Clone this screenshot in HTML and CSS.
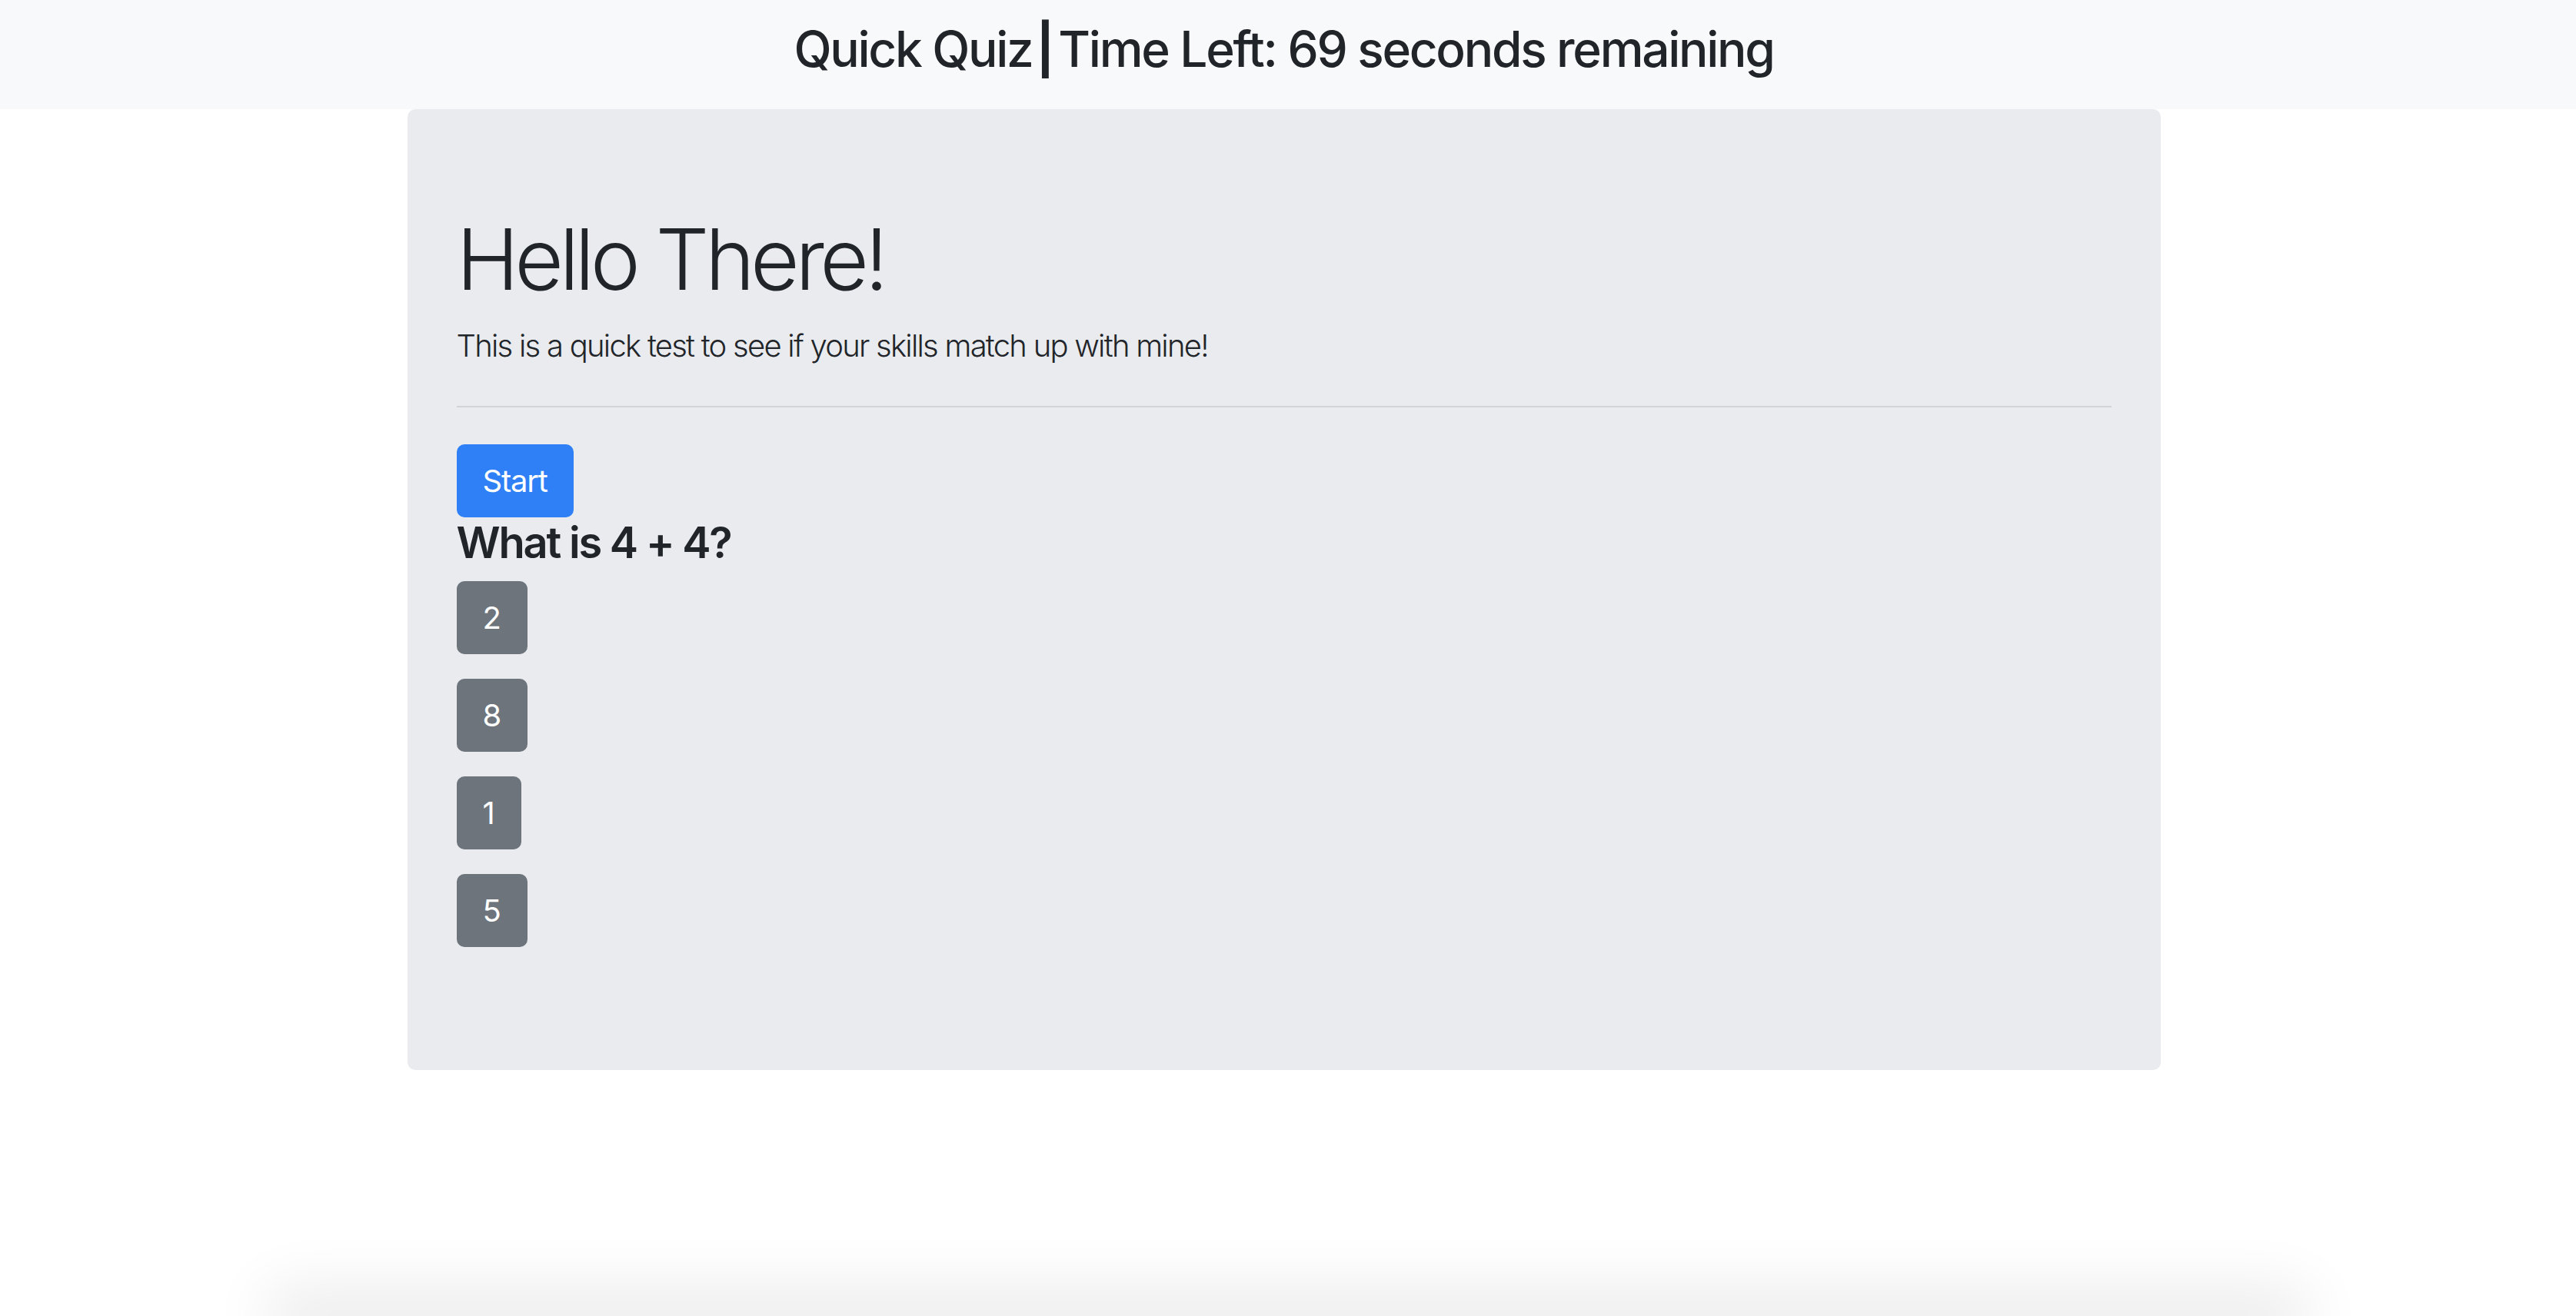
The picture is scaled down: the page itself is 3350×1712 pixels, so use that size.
FILE: index.html
```html
<!DOCTYPE html>
<html lang="en">
<head>
<meta charset="utf-8">
<title>Quick Quiz</title>
<link rel="stylesheet" href="styles.css">
</head>
<body>
<div class="page">
  <header class="topbar">
    <h2 class="topbar-title">Quick Quiz<span class="sep">|</span>Time Left: 69 seconds remaining</h2>
  </header>
  <main class="main">
    <section class="jumbotron">
      <h1 class="display">Hello There!</h1>
      <p class="lead">This is a quick test to see if your skills match up with mine!</p>
      <hr class="divider">
      <button class="btn btn-primary" type="button">Start</button>
      <h3 class="question">What is 4 + 4?</h3>
      <div class="answers">
        <button class="btn btn-secondary" type="button">2</button>
        <button class="btn btn-secondary" type="button">8</button>
        <button class="btn btn-secondary" type="button">1</button>
        <button class="btn btn-secondary" type="button">5</button>
      </div>
    </section>
  </main>
  <div class="dock"></div>
</div>
</body>
</html>
```

FILE: styles.css
```css
* { box-sizing: border-box; }

html, body {
  margin: 0;
  padding: 0;
  background: #ffffff;
}

body {
  font-family: Inter, "Liberation Sans", Arial, sans-serif;
  color: #212529;
}

.page {
  min-height: 1712px;
  display: flex;
  flex-direction: column;
}

.topbar {
  background: #f8f9fa;
  height: 142px;
  padding-top: 25px;
  text-align: center;
}

.topbar-title {
  margin: 0;
  font-size: 64px;
  font-weight: 500;
  line-height: 77px;
  letter-spacing: -2.3px;
  padding-right: 11px;
}

.sep {
  font-weight: 700;
  letter-spacing: 0;
  margin: 0 5px;
}

.main {
  padding-right: 11px;
}

.jumbotron {
  width: 2280px;
  margin: 0 auto;
  background: #e9ebef;
  border-radius: 10px;
  padding: 128px 64px;
}

.display {
  margin: 0 0 16px;
  font-size: 110px;
  font-weight: 300;
  line-height: 134px;
  letter-spacing: -5.6px;
}

.lead {
  margin: 0 0 32px;
  font-size: 40px;
  font-weight: 300;
  line-height: 60px;
  letter-spacing: -1.75px;
}

.divider {
  margin: 48px 0;
  border: 0;
  border-top: 2px solid rgba(0, 0, 0, 0.1);
  height: 0;
}

.btn {
  display: inline-block;
  font-family: inherit;
  font-size: 40px;
  font-weight: 400;
  line-height: 59px;
  padding: 16px 32px;
  border: 2px solid transparent;
  border-radius: 10px;
  color: #ffffff;
  cursor: pointer;
}

.btn-primary {
  background: #2f80f7;
  border-color: #2f80f7;
  letter-spacing: -1.2px;
}

.btn-secondary {
  background: #6d747c;
  border-color: #6d747c;
}

.question {
  margin: 0 0 16px;
  font-size: 56px;
  font-weight: 600;
  line-height: 1.2;
  letter-spacing: -2.2px;
}

.answers {
  display: flex;
  flex-direction: column;
  align-items: flex-start;
  gap: 32px;
  padding-bottom: 32px;
}

.dock {
  margin-top: auto;
  align-self: center;
  width: 2582px;
  height: 0;
  box-shadow: 0 0 80px 34px rgba(0, 0, 0, 0.09);
}
```
